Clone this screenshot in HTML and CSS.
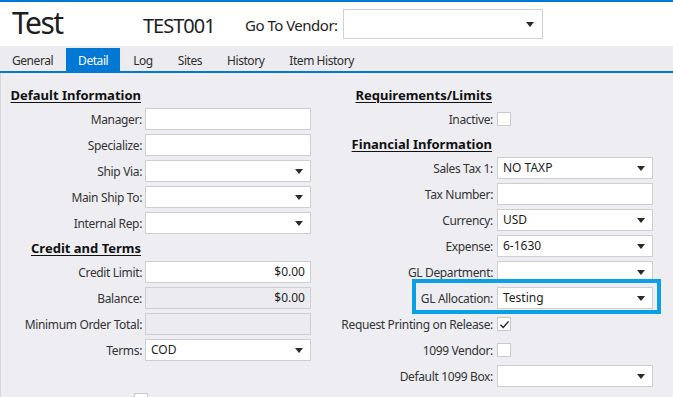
FILE: index.html
```html
<!DOCTYPE html>
<html lang="en">
<head>
  <meta charset="UTF-8" />
  <meta name="viewport" content="width=device-width, initial-scale=1.0" />
  <title>Vendor - Test</title>
  <link rel="stylesheet" href="styles.css">
</head>
<body>

  <header class="header">
    <h1 class="title">Test</h1>
    <span class="code">TEST001</span>
    <span class="goto">Go To Vendor:</span>
    <div class="field select vendor-select"><span></span><i class="caret"></i></div>
  </header>

  <nav class="tabs">
    <a class="tab">General</a>
    <a class="tab active">Detail</a>
    <a class="tab">Log</a>
    <a class="tab">Sites</a>
    <a class="tab">History</a>
    <a class="tab">Item History</a>
  </nav>

  <main class="content">
    <section class="col col-left">
      <div class="heading"><span>Default Information</span></div>
      <div class="row"><label>Manager:</label><div class="field"></div></div>
      <div class="row"><label>Specialize:</label><div class="field"></div></div>
      <div class="row"><label>Ship Via:</label><div class="field select"><span></span><i class="caret"></i></div></div>
      <div class="row"><label>Main Ship To:</label><div class="field select"><span></span><i class="caret"></i></div></div>
      <div class="row"><label>Internal Rep:</label><div class="field select"><span></span><i class="caret"></i></div></div>

      <div class="heading"><span>Credit and Terms</span></div>
      <div class="row"><label>Credit Limit:</label><div class="field money">$0.00</div></div>
      <div class="row"><label>Balance:</label><div class="field money disabled">$0.00</div></div>
      <div class="row"><label>Minimum Order Total:</label><div class="field disabled"></div></div>
      <div class="row"><label>Terms:</label><div class="field select"><span>COD</span><i class="caret"></i></div></div>
      <div class="spacer"></div>
      <div class="row row-loose"><span class="check"></span></div>
    </section>

    <section class="col col-right">
      <div class="heading"><span>Requirements/Limits</span></div>
      <div class="row"><label>Inactive:</label><span class="check"></span></div>

      <div class="heading"><span>Financial Information</span></div>
      <div class="row"><label>Sales Tax 1:</label><div class="field select"><span>NO TAXP</span><i class="caret"></i></div></div>
      <div class="row"><label>Tax Number:</label><div class="field"></div></div>
      <div class="row"><label>Currency:</label><div class="field select"><span>USD</span><i class="caret"></i></div></div>
      <div class="row"><label>Expense:</label><div class="field select"><span>6-1630</span><i class="caret"></i></div></div>
      <div class="row"><label>GL Department:</label><div class="field select"><span></span><i class="caret"></i></div></div>
      <div class="row highlight"><label>GL Allocation:</label><div class="field select"><span>Testing</span><i class="caret"></i></div></div>
      <div class="row">
        <label>Request Printing on Release:</label>
        <span class="check">
          <svg width="11" height="11" viewBox="0 0 11 11"><path d="M1.5 5.8 L4.2 8.4 L9.6 2.4" fill="none" stroke="#222" stroke-width="1.4"/></svg>
        </span>
      </div>
      <div class="row"><label>1099 Vendor:</label><span class="check"></span></div>
      <div class="row"><label>Default 1099 Box:</label><div class="field select"><span></span><i class="caret"></i></div></div>
    </section>
  </main>

</body>
</html>
```

FILE: styles.css
```css
* {
  box-sizing: border-box;
}

body {
  margin: 0;
  padding: 0;
  font-family: 'Noto Sans', 'Open Sans', Arial, sans-serif;
  color: #333;
  background: #eeeef2;
  height: 100vh;
  overflow: hidden;
  border-top: 2px solid #0078d4;
}

.header {
  height: 44px;
  background: #fff;
  display: flex;
  align-items: center;
  padding-left: 12px;
  white-space: nowrap;
}

.title {
  margin: 0;
  width: 131px;
  font-size: 30px;
  font-weight: 400;
  color: #1e1e1e;
  line-height: 1;
  letter-spacing: -1.5px;
  padding-bottom: 2px;
}

.code {
  width: 102px;
  font-size: 20px;
  color: #1e1e1e;
  letter-spacing: -1px;
  padding-top: 2px;
}

.goto {
  width: 98px;
  font-size: 15px;
  color: #1e1e1e;
  letter-spacing: -0.5px;
  padding-top: 2px;
}

.tabs {
  display: flex;
  align-items: flex-end;
  height: 27px;
  border-bottom: 2px solid #0078d4;
  background: #ececf0;
}

.tab {
  height: 23px;
  padding: 0 12px;
  margin-right: 1px;
  font-size: 12px;
  letter-spacing: -0.45px;
  line-height: 25px;
  color: #2e2e2e;
  cursor: pointer;
}

.tab.active {
  background: #0078d4;
  color: #fff;
}

.content {
  display: flex;
  gap: 29px;
  padding-top: 10px;
  border-left: 1px solid #d6d6de;
  height: 100%;
}

.col-left {
  --label-w: 141px;
  --label-gap: 3px;
  --field-w: 166px;
}

.col-right {
  --label-w: 153px;
  --label-gap: 4px;
  --field-w: 156px;
}

.heading {
  width: var(--label-w);
  height: 23px;
  display: flex;
  align-items: center;
  justify-content: flex-end;
  padding-right: 1px;
}

.heading span {
  font-size: 13px;
  font-weight: 700;
  color: #111;
  text-decoration: underline;
  text-underline-offset: 2px;
  white-space: nowrap;
}

.row {
  height: 26px;
  display: flex;
  align-items: center;
  gap: var(--label-gap);
  position: relative;
}

.row label {
  width: var(--label-w);
  text-align: right;
  font-size: 12px;
  letter-spacing: -0.35px;
  white-space: nowrap;
  color: #333;
}

.field {
  width: var(--field-w);
  height: 22px;
  background: #fff;
  border: 1px solid #cdcdd6;
  font-size: 12px;
  color: #1e1e1e;
  padding: 0 5px;
  line-height: 20px;
  white-space: nowrap;
}

.field.disabled {
  background: #ececf0;
}

.money {
  text-align: right;
}

.select {
  display: flex;
  align-items: center;
  justify-content: space-between;
  padding-right: 7px;
}

.caret {
  width: 0;
  height: 0;
  border-left: 4px solid transparent;
  border-right: 4px solid transparent;
  border-top: 5px solid #2b2b2b;
}

.vendor-select {
  width: 200px;
  height: 30px;
  border-color: #cfcfd8;
  padding-right: 8px;
}

.check {
  width: 14px;
  height: 14px;
  background: #fff;
  border: 1px solid #c8c8d2;
  display: flex;
  align-items: center;
  justify-content: center;
}

.spacer {
  height: 24px;
}

.row-loose .check {
  margin-left: 133px;
}

.highlight::after {
  content: "";
  position: absolute;
  left: 72px;
  right: -8px;
  top: -6px;
  bottom: -3px;
  border: 4px solid #0aa1e4;
  pointer-events: none;
}
```
